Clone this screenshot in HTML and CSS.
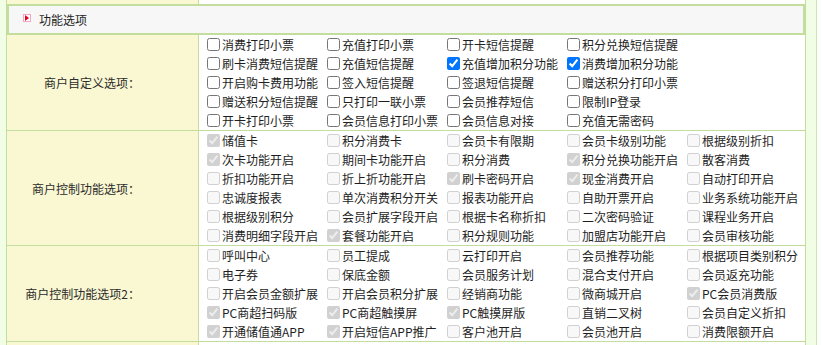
FILE: index.html
```html
<!DOCTYPE html>
<html lang="zh-CN">
<head>
    <meta charset="UTF-8">
    <meta name="viewport" content="width=device-width, initial-scale=1.0">
    <title>功能选项</title>
    <link rel="stylesheet" href="styles.css">
</head>
<body>
    <div class="page">
        <div class="panel">
            <!-- 上一行的末尾 -->
            <div class="row stub"><div class="label"></div><div class="field"></div></div>

            <div class="section-head">
                <span class="toggle"><svg width="6" height="6" viewBox="0 0 6 6"><path d="M1 0 L5 3 L1 6 Z" fill="#e0001b"/></svg></span>
                功能选项
            </div>

            <div class="row">
                <div class="label">商户自定义选项：</div>
                <div class="field cols-4">
                    <label class="opt"><input type="checkbox">消费打印小票</label>
                    <label class="opt"><input type="checkbox">充值打印小票</label>
                    <label class="opt"><input type="checkbox">开卡短信提醒</label>
                    <label class="opt"><input type="checkbox">积分兑换短信提醒</label>
                    <label class="opt"><input type="checkbox">刷卡消费短信提醒</label>
                    <label class="opt"><input type="checkbox">充值短信提醒</label>
                    <label class="opt"><input type="checkbox" checked>充值增加积分功能</label>
                    <label class="opt"><input type="checkbox" checked>消费增加积分功能</label>
                    <label class="opt"><input type="checkbox">开启购卡费用功能</label>
                    <label class="opt"><input type="checkbox">签入短信提醒</label>
                    <label class="opt"><input type="checkbox">签退短信提醒</label>
                    <label class="opt"><input type="checkbox">赠送积分打印小票</label>
                    <label class="opt"><input type="checkbox">赠送积分短信提醒</label>
                    <label class="opt"><input type="checkbox">只打印一联小票</label>
                    <label class="opt"><input type="checkbox">会员推荐短信</label>
                    <label class="opt"><input type="checkbox">限制IP登录</label>
                    <label class="opt"><input type="checkbox">开卡打印小票</label>
                    <label class="opt"><input type="checkbox">会员信息打印小票</label>
                    <label class="opt"><input type="checkbox">会员信息对接</label>
                    <label class="opt"><input type="checkbox">充值无需密码</label>
                </div>
            </div>

            <div class="row">
                <div class="label">商户控制功能选项：</div>
                <div class="field">
                    <label class="opt"><input type="checkbox" disabled checked>储值卡</label>
                    <label class="opt"><input type="checkbox" disabled>积分消费卡</label>
                    <label class="opt"><input type="checkbox" disabled>会员卡有限期</label>
                    <label class="opt"><input type="checkbox" disabled>会员卡级别功能</label>
                    <label class="opt"><input type="checkbox" disabled>根据级别折扣</label>
                    <label class="opt"><input type="checkbox" disabled checked>次卡功能开启</label>
                    <label class="opt"><input type="checkbox" disabled>期间卡功能开启</label>
                    <label class="opt"><input type="checkbox" disabled>积分消费</label>
                    <label class="opt"><input type="checkbox" disabled checked>积分兑换功能开启</label>
                    <label class="opt"><input type="checkbox" disabled>散客消费</label>
                    <label class="opt"><input type="checkbox" disabled>折扣功能开启</label>
                    <label class="opt"><input type="checkbox" disabled>折上折功能开启</label>
                    <label class="opt"><input type="checkbox" disabled checked>刷卡密码开启</label>
                    <label class="opt"><input type="checkbox" disabled checked>现金消费开启</label>
                    <label class="opt"><input type="checkbox" disabled>自动打印开启</label>
                    <label class="opt"><input type="checkbox" disabled>忠诚度报表</label>
                    <label class="opt"><input type="checkbox" disabled>单次消费积分开关</label>
                    <label class="opt"><input type="checkbox" disabled>报表功能开启</label>
                    <label class="opt"><input type="checkbox" disabled>自助开票开启</label>
                    <label class="opt"><input type="checkbox" disabled>业务系统功能开启</label>
                    <label class="opt"><input type="checkbox" disabled>根据级别积分</label>
                    <label class="opt"><input type="checkbox" disabled>会员扩展字段开启</label>
                    <label class="opt"><input type="checkbox" disabled>根据卡名称折扣</label>
                    <label class="opt"><input type="checkbox" disabled>二次密码验证</label>
                    <label class="opt"><input type="checkbox" disabled>课程业务开启</label>
                    <label class="opt"><input type="checkbox" disabled>消费明细字段开启</label>
                    <label class="opt"><input type="checkbox" disabled checked>套餐功能开启</label>
                    <label class="opt"><input type="checkbox" disabled>积分规则功能</label>
                    <label class="opt"><input type="checkbox" disabled>加盟店功能开启</label>
                    <label class="opt"><input type="checkbox" disabled>会员审核功能</label>
                </div>
            </div>

            <div class="row">
                <div class="label">商户控制功能选项2：</div>
                <div class="field">
                    <label class="opt"><input type="checkbox" disabled>呼叫中心</label>
                    <label class="opt"><input type="checkbox" disabled>员工提成</label>
                    <label class="opt"><input type="checkbox" disabled>云打印开启</label>
                    <label class="opt"><input type="checkbox" disabled>会员推荐功能</label>
                    <label class="opt"><input type="checkbox" disabled>根据项目类别积分</label>
                    <label class="opt"><input type="checkbox" disabled>电子券</label>
                    <label class="opt"><input type="checkbox" disabled>保底金额</label>
                    <label class="opt"><input type="checkbox" disabled>会员服务计划</label>
                    <label class="opt"><input type="checkbox" disabled>混合支付开启</label>
                    <label class="opt"><input type="checkbox" disabled>会员返充功能</label>
                    <label class="opt"><input type="checkbox" disabled>开启会员金额扩展</label>
                    <label class="opt"><input type="checkbox" disabled>开启会员积分扩展</label>
                    <label class="opt"><input type="checkbox" disabled>经销商功能</label>
                    <label class="opt"><input type="checkbox" disabled>微商城开启</label>
                    <label class="opt"><input type="checkbox" disabled checked>PC会员消费版</label>
                    <label class="opt"><input type="checkbox" disabled checked>PC商超扫码版</label>
                    <label class="opt"><input type="checkbox" disabled checked>PC商超触摸屏</label>
                    <label class="opt"><input type="checkbox" disabled checked>PC触摸屏版</label>
                    <label class="opt"><input type="checkbox" disabled>直销二叉树</label>
                    <label class="opt"><input type="checkbox" disabled>会员自定义折扣</label>
                    <label class="opt"><input type="checkbox" disabled checked>开通储值通APP</label>
                    <label class="opt"><input type="checkbox" disabled checked>开启短信APP推广</label>
                    <label class="opt"><input type="checkbox" disabled>客户池开启</label>
                    <label class="opt"><input type="checkbox" disabled>会员池开启</label>
                    <label class="opt"><input type="checkbox" disabled>消费限额开启</label>
                </div>
            </div>

            <!-- 下一行的开头 -->
            <div class="row stub"><div class="label"></div><div class="field"></div></div>
        </div>
    </div>
</body>
</html>
```

FILE: styles.css
```css
*{margin: 0; padding: 0; box-sizing: border-box;}
html,body{
    background: #fff;
}
body{
    font-family: "Noto Sans CJK SC", "Liberation Sans", sans-serif;
    font-size: 12px;
    color: #2b2b2b;
}
.page{
    width: 817px;
    height: 345px;
    padding-left: 6px;
    background: #f2fde6;
    border-right: 1px solid #cfe3b7;
    overflow: hidden;
}
.panel{
    width: 800px;
    border-left: 1px solid #c3dd9c;
    border-right: 1px solid #c3dd9c;
}
.row{
    display: flex;
    border-bottom: 1px solid #c3dd9c;
}
.row.stub{
    height: 4px;
    border-bottom: none;
}
.label{
    width: 192px;
    flex-shrink: 0;
    background: #faf8d2;
    border-right: 1px solid #c3dd9c;
    display: flex;
    align-items: center;
    justify-content: flex-end;
    padding-right: 58px;
    white-space: nowrap;
}
.field{
    flex: 1;
    background: #fff;
    padding-left: 4px;
    display: grid;
    grid-template-columns: repeat(5, 120px);
}
.field.cols-4{
    grid-template-columns: repeat(4, 120px);
}
.opt{
    display: flex;
    align-items: center;
    height: 19px;
    white-space: nowrap;
    color: #1e1e1e;
}
.opt input{
    width: 13px;
    height: 13px;
    margin: 0 2px 0 4px;
    flex-shrink: 0;
}
/* 功能选项 标题栏 */
.section-head{
    height: 31px;
    border: 2px solid #c3dd9c;
    background: #f7f7f7;
    display: flex;
    align-items: center;
    padding-left: 14px;
    color: #1e1e1e;
}
.toggle{
    width: 8px;
    height: 8px;
    border: 1px solid #f2a6c8;
    background: #fff;
    margin-right: 8px;
    margin-bottom: 3px;
    display: flex;
    align-items: center;
    justify-content: center;
}
.toggle svg{
    display: block;
}
```
